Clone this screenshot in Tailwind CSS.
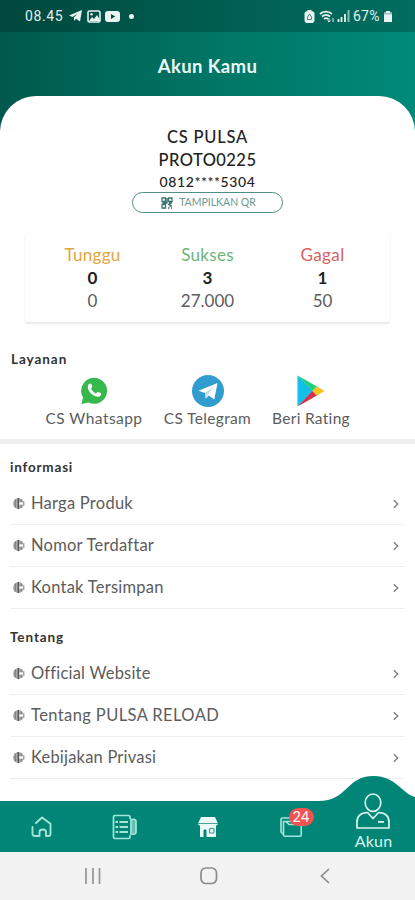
<!DOCTYPE html>
<html lang="id">
<head>
<meta charset="utf-8">
<meta name="viewport" content="width=device-width, initial-scale=1">
<title>Akun Kamu</title>
<script src="https://cdn.jsdelivr.net/npm/@tailwindcss/browser@4"></script>
</head>
<body class="bg-white">
<svg class="hidden">
  <symbol id="globe" viewBox="0 0 14 14"><circle cx="7" cy="7" r="5.800" fill="#a8a8a8"/><path d="M6.800 1v12" stroke="#555" stroke-width="1.500"/><path d="M3.500 2.500v9M10 2.500v3M10 8.500v3" stroke="#777" stroke-width="1"/><path d="M7.800 7H12" stroke="#fff" stroke-width="2.400"/><path d="M12.800 4.500v5" stroke="#888" stroke-width="1"/></symbol>
  <symbol id="chev" viewBox="0 0 8 10"><path d="M1.800 1.200 5.800 5l-4 3.800" fill="none" stroke="#808080" stroke-width="1.400"/></symbol>
</svg>
<div class="relative flex h-[900px] w-[415px] flex-col overflow-hidden bg-white font-['Lato',sans-serif] text-[#5c5c5c]">
  <header class="h-[130px] shrink-0 bg-linear-to-r from-[#00594c] via-[#007565] to-[#008a79]">
    <div class="flex h-8 items-center bg-black/20 pl-[25px] pr-[23px] font-['Roboto',sans-serif] text-[14px] text-[#e3f0ed]">
      <span class="w-[39px] tracking-[0.6px]">08.45</span>
      <svg class="ml-[5px] h-[12px] w-[13px]" viewBox="0 0 13 12"><path d="M0 5.500 13 0l-2 11.500-4-2.800L5.200 11 4.800 7.500 9 3.500 3.500 7z" fill="#e8f4f2"/></svg>
      <svg class="ml-[5px] h-[13px] w-[14px]" viewBox="0 0 14 13"><rect x="1" y="1" width="12" height="11" rx="1.500" fill="none" stroke="#e8f4f2" stroke-width="1.600"/><path d="m2 11 3-4 2 2 3-4 3 5v1z" fill="#e8f4f2"/><circle cx="4.500" cy="4.200" r="1.200" fill="#e8f4f2"/></svg>
      <svg class="ml-[4px] h-[11px] w-[15px]" viewBox="0 0 15 11"><rect width="15" height="11" rx="3" fill="#e8f4f2"/><path d="m6 3 4.200 2.500L6 8z" fill="#06483f"/></svg>
      <span class="ml-[9px] size-[5px] rounded-full bg-[#e8f4f2]"></span>
      <svg class="ml-auto h-[13px] w-[11px]" viewBox="0 0 11 13"><path d="M3.500 0h4v1.300H9L10.500 3v8L9 13H2L.5 11V3L2 1.300h1.500z" fill="#e8f4f2"/><path d="M5.500 4 7.500 7v2.500h-4V7z" fill="none" stroke="#4c8a80" stroke-width="1"/></svg>
      <svg class="ml-[4px] h-[13px] w-[16px]" viewBox="0 0 16 13"><path d="M1 4a9 9 0 0 1 12 0M3 6.500a6 6 0 0 1 8 0M5 9a3 3 0 0 1 4 0" fill="none" stroke="#e8f4f2" stroke-width="1.800"/><path d="M10 8v4m-1.500-1.500L10 12l1.500-1.500M14 12V8" fill="none" stroke="#e8f4f2" stroke-width="1"/></svg>
      <svg class="ml-[2px] h-[12px] w-[13px]" viewBox="0 0 13 12"><path d="M1.500 9v3M4.500 7v5M8 4v8" stroke="#e8f4f2" stroke-width="1.800"/><path d="M11.500 0v12" stroke="#8fbbb3" stroke-width="2"/></svg>
      <span class="ml-[3px] w-[29px] whitespace-nowrap tracking-[0.200px]">67%</span>
      <svg class="ml-[2px] h-[12px] w-[8px]" viewBox="0 0 8 12"><path d="M2 1h4v1.500h2V12H0V2.500h2z" fill="#e8f4f2"/><path d="M0 3.800h8" stroke="#7ba79f" stroke-width="1"/></svg>
    </div>
    <h1 class="pt-[20px] text-center text-[18.5px] leading-[28px] font-bold tracking-[0.4px] text-[#edfaf7]">Akun Kamu</h1>
  </header>

  <main class="relative -mt-[34px] flex flex-1 flex-col rounded-t-[36px] bg-white">
    <section class="flex flex-col items-center pt-[30px] text-[#222]">
      <p class="h-[23px] text-[16.5px] leading-[23px] font-medium tracking-[0.8px]">CS PULSA</p>
      <p class="h-[23px] text-[16.5px] leading-[23px] font-medium tracking-[0.45px]">PROTO0225</p>
      <p class="h-[20px] text-[14px] leading-[20px] font-medium tracking-[0.6px]">0812****5304</p>
      <button class="flex h-[21px] w-[151px] items-center justify-center gap-[6px] rounded-full border border-[#4f8f86] pl-[2px] text-[10.5px] text-[#6b9993]">
        <svg class="size-[12px]" viewBox="0 0 12 12" fill="none" stroke="#39776e" stroke-width="1.3"><path d="M1 1h3.500v3.500H1zM7.500 1H11v3.500H7.500zM1 7.500h3.500V11H1zM7 7.500h2V9h2M7 11h1.500M10 11h1M6 1v5H1.500M8 6h3"/></svg>
        <span>TAMPILKAN QR</span>
      </button>
    </section>

    <section class="mx-[25px] mt-[21px] grid h-[88px] grid-cols-[135px_95px_135px] content-start rounded-[3px] pt-[9px] text-center text-[17px] leading-[23px] shadow-[0_2px_2px_rgba(0,0,0,0.09),0_0_2px_rgba(0,0,0,0.04)]">
      <div><p class="tracking-[0.3px] text-[#e2a63a]">Tunggu</p><p class="font-bold text-[#222]">0</p><p>0</p></div>
      <div><p class="tracking-[0.3px] text-[#6bb575]">Sukses</p><p class="font-bold text-[#222]">3</p><p>27.000</p></div>
      <div><p class="tracking-[0.4px] text-[#d95f5f]">Gagal</p><p class="font-bold text-[#222]">1</p><p>50</p></div>
    </section>

    <section class="h-[122px] border-b-[5px] border-[#efefef] pt-[27px]">
      <h2 class="pl-[11px] text-[13.5px] leading-[20px] font-bold tracking-[0.95px] text-[#333]">Layanan</h2>
      <div class="mt-[6px] flex pl-[38px] text-[15.5px]">
        <div class="flex w-[112px] flex-col items-center">
          <svg class="size-[32px]" viewBox="0 0 32 32"><path d="M3.500 29 5 22.500A13 13 0 1 1 10.500 27.500z" fill="#35b84c"/><path d="M10.500 9.500c1-1.500 2.500-1.300 3 0l.9 2.300-1.300 2c1 2.200 2.500 3.700 4.800 4.700l1.800-1.800 3.300 1.600c.7 2-1.200 3.600-3.500 3.500-5.300-.6-9.600-5.300-9.700-9.700 0-1 .2-1.800.7-2.600z" fill="#fff"/></svg>
          <span class="whitespace-nowrap leading-[22px] tracking-[0.45px]">CS Whatsapp</span>
        </div>
        <div class="flex w-[115px] flex-col items-center">
          <svg class="size-[32px]" viewBox="0 0 32 32"><circle cx="16" cy="16" r="16" fill="#319dce"/><path d="M6.500 15.800 25.500 8l-3.200 16.500-5.500-4.100-3 3-.8-5.400z" fill="#fff"/><path d="m13 18 9-6.800-6.200 8.400-2 3.800z" fill="#bfdcec"/></svg>
          <span class="whitespace-nowrap leading-[22px] tracking-[0.35px]">CS Telegram</span>
        </div>
        <div class="flex w-[92px] flex-col items-center">
          <svg class="size-[32px]" viewBox="0 0 32 32"><path d="M2.500.5v31L18 16z" fill="#12bfe8"/><path d="M2.500.5 22 11.500 17.500 16z" fill="#1fd07a"/><path d="m2.500 31.500 15-15.500 4.500 4.500z" fill="#d92f48"/><path d="m22 11.500 7.500 4.500L22 20.500 17.500 16z" fill="#f8c21c"/></svg>
          <span class="whitespace-nowrap leading-[22px] tracking-[0.3px]">Beri Rating</span>
        </div>
      </div>
    </section>

    <section class="px-[10px] pt-[13px]">
      <h2 class="h-[26px] text-[13.5px] leading-[20px] font-bold tracking-[0.8px] text-[#333]">informasi</h2>
      <ul class="text-[16.5px] tracking-[0.25px]">
        <li class="flex h-[42px] items-center border-b border-[#eee]"><svg class="mx-[2px] size-[13px]"><use href="#globe"/></svg><span class="ml-[4px]">Harga Produk</span><svg class="ml-auto mr-[5px] h-[10px] w-[8px]"><use href="#chev"/></svg></li>
        <li class="flex h-[42px] items-center border-b border-[#eee]"><svg class="mx-[2px] size-[13px]"><use href="#globe"/></svg><span class="ml-[4px]">Nomor Terdaftar</span><svg class="ml-auto mr-[5px] h-[10px] w-[8px]"><use href="#chev"/></svg></li>
        <li class="flex h-[42px] items-center border-b border-[#eee]"><svg class="mx-[2px] size-[13px]"><use href="#globe"/></svg><span class="ml-[4px]">Kontak Tersimpan</span><svg class="ml-auto mr-[5px] h-[10px] w-[8px]"><use href="#chev"/></svg></li>
      </ul>
    </section>

    <section class="px-[10px] pt-[18px]">
      <h2 class="h-[26px] text-[13.5px] leading-[20px] font-bold tracking-[0.9px] text-[#333]">Tentang</h2>
      <ul class="text-[16.5px] tracking-[0.2px]">
        <li class="flex h-[42px] items-center border-b border-[#eee]"><svg class="mx-[2px] size-[13px]"><use href="#globe"/></svg><span class="ml-[4px]">Official Website</span><svg class="ml-auto mr-[5px] h-[10px] w-[8px]"><use href="#chev"/></svg></li>
        <li class="flex h-[42px] items-center border-b border-[#eee]"><svg class="mx-[2px] size-[13px]"><use href="#globe"/></svg><span class="ml-[4px] tracking-[0.4px]">Tentang PULSA RELOAD</span><svg class="ml-auto mr-[5px] h-[10px] w-[8px]"><use href="#chev"/></svg></li>
        <li class="flex h-[42px] items-center border-b border-[#eee]"><svg class="mx-[2px] size-[13px]"><use href="#globe"/></svg><span class="ml-[4px]">Kebijakan Privasi</span><svg class="ml-auto mr-[5px] h-[10px] w-[8px]"><use href="#chev"/></svg></li>
      </ul>
    </section>
  </main>

  <nav class="relative h-[51px] shrink-0 text-[#d9f3ee]">
    <svg class="absolute bottom-0 left-0 h-[77px] w-[415px]" viewBox="0 0 415 77"><path d="M0 26h318c31 0 27-25 56-25 21 0 29 18 41 21v55H0z" fill="#008576"/></svg>
    <div class="relative grid h-full grid-cols-5 grid-rows-[51px] items-center justify-items-center">
      <svg class="size-[22px]" viewBox="0 0 22 22" fill="none" stroke="#a5e5d9" stroke-width="1.900" stroke-linejoin="round" stroke-linecap="round"><path d="M5 7 11 1.500l8.500 6.300V18q0 2-2 2H15v-4q0-2.500-3.200-2.500T8.500 16v4H4q-2.500 0-2.500-2.500V11"/></svg>
      <svg class="h-[26px] w-[26px]" viewBox="0 0 26 26" fill="none" stroke="#a5e5d9" stroke-width="1.700"><path d="M18 5V3q0-1.500-1.500-1.500H3Q1.500 1.500 1.500 3v20q0 1.500 1.500 1.500h13.500Q18 24.500 18 23v-2"/><path d="M7.500 8H16M7.500 13H16M7.500 18H16M3.500 8H6M3.500 13H6M3.500 18H6" stroke-width="2"/><path d="M19 5.500q5-1 5 2V18q0 3-5 2z" fill="#5fc0b1"/></svg>
      <svg class="size-[22px]" viewBox="0 0 22 22"><path d="M4 1h14l3 6.500q0 2-2 2V21H3V9.500Q1 9.500 1 7.500z" fill="#e9faf7"/><path d="M1 7.500h20" stroke="#4aa497" stroke-width="1"/><path d="M6.500 21v-6.500q0-1 1-1h1q1 0 1 1V21z" fill="#008576"/><rect x="12.500" y="12.500" width="4.500" height="4.500" rx="1" fill="none" stroke="#3c9c8f" stroke-width="1.200"/></svg>
      <div class="relative">
        <svg class="h-[20px] w-[22px]" viewBox="0 0 22 20" fill="none" stroke="#a5e5d9" stroke-width="1.600"><path d="M3.500 4.500H20q1.200 0 1.200 1.200V18q0 1.200-1.200 1.200H4.500Q3.500 19 3.500 18z"/><path d="M3.500 17.500 1 15V2.500Q1 1 2.500 1H12l2 3M6 4.500l3 3h6"/></svg>
        <span class="absolute -top-[9px] left-[9px] flex h-[18px] w-[25px] items-center justify-center rounded-full bg-[#ef5453] text-[14.500px] text-white">24</span>
      </div>
      <div class="relative -top-[4px] flex flex-col items-center">
        <svg class="h-[36px] w-[34px]" viewBox="0 0 34 36" fill="none" stroke="#d9f7f1" stroke-width="1.700" stroke-linejoin="round"><ellipse cx="17" cy="9.700" rx="7.800" ry="8.700"/><path d="M11.500 19.500Q1 20 1 29v6h32v-6q0-9-10.500-9.500l-5.500 6zM22 28.800h6"/></svg>
        <span class="text-[16px] leading-[24px] tracking-[0.200px]">Akun</span>
      </div>
    </div>
  </nav>
  <footer class="flex h-[48px] shrink-0 items-center bg-[#f2f2f2] pl-[84px]">
    <svg class="h-[16px] w-[18px]" viewBox="0 0 18 16" stroke="#999" stroke-width="1.800"><path d="M2 0v16M9 0v16M15.500 0v16"/></svg>
    <svg class="ml-[98px] size-[18px]" viewBox="0 0 18 18"><rect x="1" y="1" width="15.500" height="15.500" rx="5" fill="none" stroke="#8c8c8c" stroke-width="1.700"/></svg>
    <svg class="ml-[102px] h-[16px] w-[10px]" viewBox="0 0 10 16"><path d="M9 1 1.500 8 9 15" fill="none" stroke="#8c8c8c" stroke-width="1.700"/></svg>
  </footer>
</div>
</body>
</html>
